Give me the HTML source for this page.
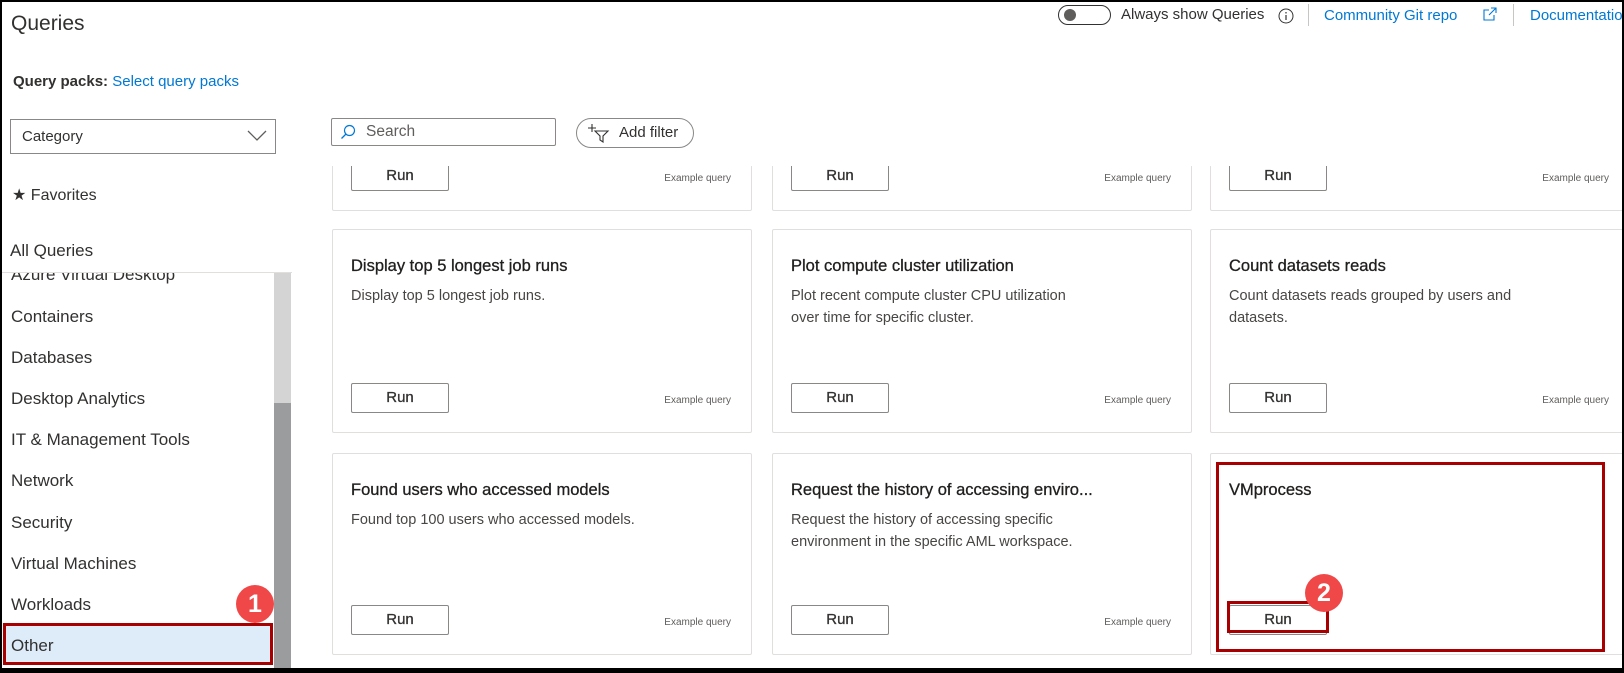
<!DOCTYPE html>
<html><head><meta charset="utf-8"><style>
*{box-sizing:border-box;margin:0;padding:0}
body{width:1624px;height:673px;overflow:hidden;background:#000;font-family:"Segoe UI","Liberation Sans",sans-serif;color:#323130;position:relative}
#pg{position:absolute;left:2px;top:2px;width:1620px;height:666px;background:#fff;overflow:hidden}
.a{position:absolute;white-space:nowrap}
.link{color:#0078d4}
.item{position:absolute;left:9px;font-size:17px;color:#323130}
.card{position:absolute;border:1px solid #e1dfdd;border-radius:2px;background:#fff;width:420px}
.card .t{position:absolute;left:18px;top:27px;font-size:16.5px;color:#201f1e;white-space:nowrap;-webkit-text-stroke:0.3px #201f1e}
.card .d{position:absolute;left:18px;top:55px;font-size:14.5px;line-height:22px;color:#484644}
.run{position:absolute;left:18px;bottom:19px;width:98px;height:30px;border:1px solid #8a8886;border-radius:2px;font-size:15px;text-align:center;line-height:28px;color:#323130;background:#fff;-webkit-text-stroke:0.3px #323130}
.ex{position:absolute;right:20px;bottom:26px;font-size:10px;color:#605e5c}
.badge{position:absolute;width:38px;height:38px;border-radius:50%;background:#f04848;color:#fff;font-size:25px;font-weight:bold;text-align:center;line-height:38px;font-family:"Liberation Sans",sans-serif}
</style></head><body>
<div id="pg">
<div class="a" style="left:9px;top:10px;font-size:21px">Queries</div>
<div class="a" style="left:11px;top:71px;font-size:15px"><b>Query packs:</b> <span class="link">Select query packs</span></div>
<div class="a" style="left:8px;top:117px;width:266px;height:35px;border:1px solid #8a8886;font-size:15px;line-height:33px;padding-left:11px">Category
<svg style="position:absolute;right:8px;top:9px" width="20" height="14" viewBox="0 0 20 14"><path d="M1 2 L10 11 L19 2" fill="none" stroke="#605e5c" stroke-width="1.3"/></svg></div>
<div class="a" style="left:10px;top:183px;font-size:16px">★ Favorites</div>
<div class="a" style="left:8px;top:239px;font-size:17px">All Queries</div>
<div style="position:absolute;left:0;top:270px;width:290px;height:400px;overflow:hidden;border-top:1px solid #e1dfdd">
<div class="item" style="top:-8px">Azure Virtual Desktop</div>
<div class="item" style="top:34px">Containers</div>
<div class="item" style="top:75px">Databases</div>
<div class="item" style="top:116px">Desktop Analytics</div>
<div class="item" style="top:157px">IT &amp; Management Tools</div>
<div class="item" style="top:198px">Network</div>
<div class="item" style="top:240px">Security</div>
<div class="item" style="top:281px">Virtual Machines</div>
<div class="item" style="top:322px">Workloads</div>
<div style="position:absolute;left:1px;top:350px;width:270px;height:42px;background:#deecf9;border:3px solid #a80000"></div>
<div class="item" style="top:363px">Other</div>
<div style="position:absolute;left:272px;top:0;width:17px;height:130px;background:#d4d4d4"></div>
<div style="position:absolute;left:272px;top:130px;width:17px;height:280px;background:#9a9c9e"></div>
</div>
<div class="badge" style="left:234px;top:583px">1</div>

<div class="a" style="left:329px;top:116px;width:225px;height:28px;border:1px solid #8a8886;border-radius:2px;font-size:15.5px;line-height:26px;padding-left:34px;color:#605e5c">Search
<svg style="position:absolute;left:8px;top:5px" width="16" height="16" viewBox="0 0 16 16"><circle cx="9.5" cy="6.5" r="5" fill="none" stroke="#0078d4" stroke-width="1.2"/><path d="M6 10 L1.5 14.5" stroke="#0078d4" stroke-width="1.3"/></svg></div>
<div class="a" style="left:574px;top:116px;width:118px;height:30px;border:1px solid #8a8886;border-radius:15px;font-size:15px;line-height:28px;padding-left:42px">Add filter
<svg style="position:absolute;left:10px;top:4px" width="24" height="20" viewBox="0 0 24 20"><path d="M5 1 V9 M1 5 H9" stroke="#323130" stroke-width="1.1"/><path d="M8 8 H21 L16 13 V19 L13 17 V13 Z" fill="none" stroke="#323130" stroke-width="1.1"/></svg></div>

<div class="a" style="left:1056px;top:3px;width:53px;height:20px;border:1px solid #323130;border-radius:10px"><div style="position:absolute;left:5px;top:3px;width:12px;height:12px;border-radius:50%;background:#605e5c"></div></div>
<div class="a" style="left:1119px;top:4px;font-size:15px">Always show Queries</div>
<svg class="a" style="left:1276px;top:6px" width="16" height="16" viewBox="0 0 16 16"><circle cx="8" cy="8" r="7" fill="none" stroke="#323130"/><path d="M8 7 V12 M8 4 V5.5" stroke="#323130" stroke-width="1.2"/></svg>
<div class="a" style="left:1306px;top:2px;width:1px;height:22px;background:#c8c6c4"></div>
<div class="a link" style="left:1322px;top:5px;font-size:15px">Community Git repo</div>
<svg class="a" style="left:1480px;top:4px" width="16" height="16" viewBox="0 0 16 16"><path d="M7 4 H2 V14 H12 V9 M9 2 H14 V7 M14 2 L7 9" fill="none" stroke="#0078d4" stroke-width="1.1"/></svg>
<div class="a" style="left:1511px;top:2px;width:1px;height:22px;background:#c8c6c4"></div>
<div class="a link" style="left:1528px;top:5px;font-size:15px">Documentation</div>

<div style="position:absolute;left:300px;top:164px;width:1320px;height:510px;overflow:hidden">
<div class="card" style="left:30px;top:-80px;height:125px"><div class="run">Run</div><div class="ex">Example query</div></div>
<div class="card" style="left:470px;top:-80px;height:125px"><div class="run">Run</div><div class="ex">Example query</div></div>
<div class="card" style="left:908px;top:-80px;height:125px"><div class="run">Run</div><div class="ex">Example query</div></div>
<div class="card" style="left:30px;top:63px;height:204px"><div class="t">Display top 5 longest job runs</div><div class="d">Display top 5 longest job runs.</div><div class="run">Run</div><div class="ex">Example query</div></div>
<div class="card" style="left:470px;top:63px;height:204px"><div class="t">Plot compute cluster utilization</div><div class="d">Plot recent compute cluster CPU utilization<br>over time for specific cluster.</div><div class="run">Run</div><div class="ex">Example query</div></div>
<div class="card" style="left:908px;top:63px;height:204px"><div class="t">Count datasets reads</div><div class="d">Count datasets reads grouped by users and<br>datasets.</div><div class="run">Run</div><div class="ex">Example query</div></div>
<div class="card" style="left:30px;top:287px;height:202px"><div class="t">Found users who accessed models</div><div class="d">Found top 100 users who accessed models.</div><div class="run">Run</div><div class="ex">Example query</div></div>
<div class="card" style="left:470px;top:287px;height:202px"><div class="t">Request the history of accessing enviro...</div><div class="d">Request the history of accessing specific<br>environment in the specific AML workspace.</div><div class="run">Run</div><div class="ex">Example query</div></div>
<div class="card" style="left:908px;top:287px;height:202px"><div class="t">VMprocess</div><div class="run">Run</div></div>
<div style="position:absolute;left:914px;top:296px;width:389px;height:190px;border:3px solid #a80000"></div>
<div style="position:absolute;left:925px;top:435px;width:102px;height:32px;border:3px solid #a80000"></div>
</div>
<div class="badge" style="left:1303px;top:572px">2</div>
</div>
</body></html>
